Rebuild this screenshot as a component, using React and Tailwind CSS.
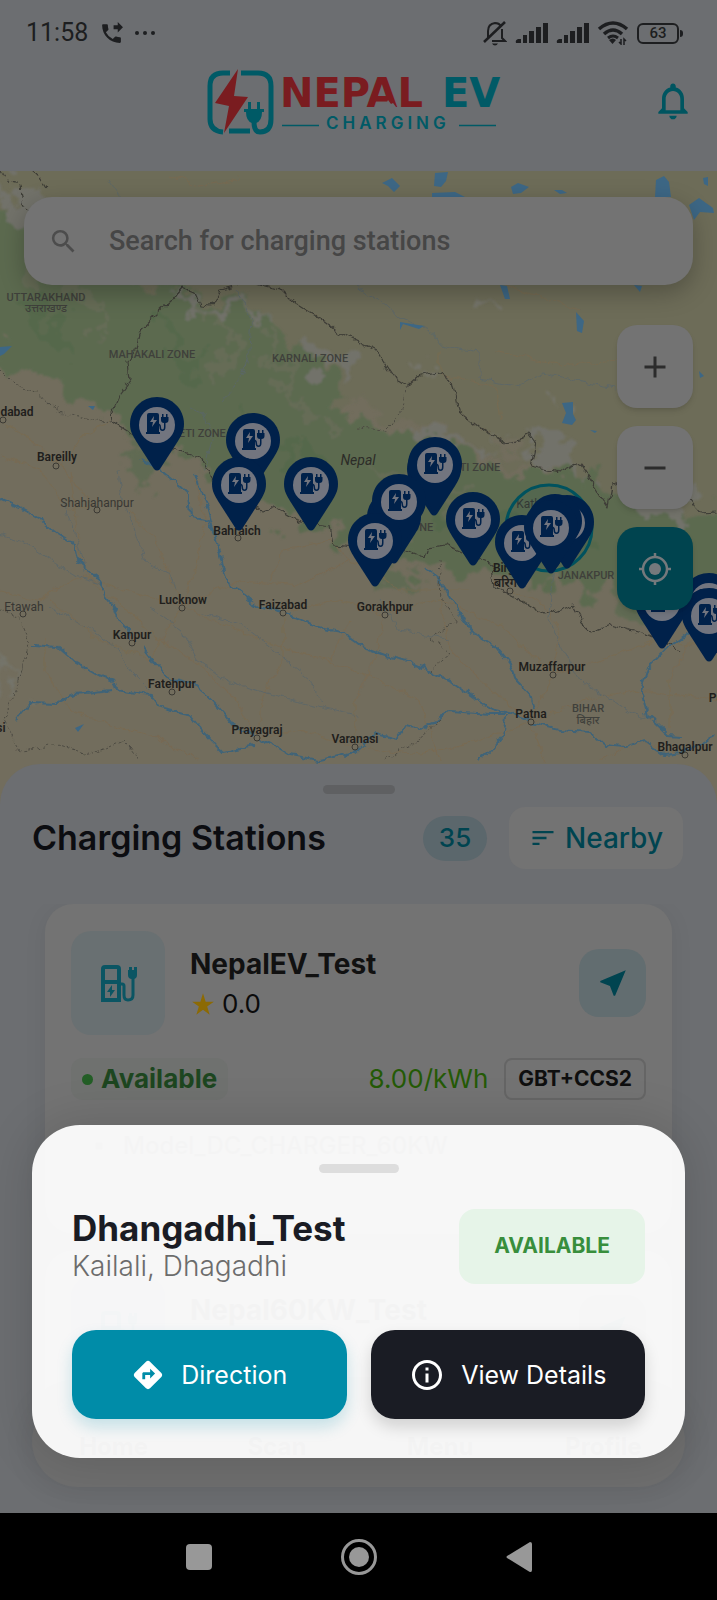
import {
  MdAdd,
  MdDirections,
  MdInfoOutline,
  MdNearMe,
  MdNotificationsNone,
  MdPhoneForwarded,
  MdRemove,
  MdSearch,
  MdSort,
  MdStarRate,
} from 'react-icons/md'

// x = tip of the pin, y = top of its head, painted back to front
const pins = [
  [157, 397], [253, 413], [239, 457], [311, 457],
  [434, 442], [435, 437], [394, 490], [399, 474], [375, 513],
  [473, 492], [522, 515], [567, 495], [555, 494], [551, 500],
  [662, 575], [709, 573], [709, 588],
]

const cities = [
  { name: 'dabad', x: 17, y: 416, dot: [3, 420] },
  { name: 'Bareilly', x: 57, y: 461, dot: [56, 466] },
  { name: 'Shahjahanpur', x: 97, y: 507, dot: [97, 510], light: true },
  { name: 'Bahraich', x: 237, y: 535, dot: [238, 538] },
  { name: 'Lucknow', x: 183, y: 604, dot: [182, 608] },
  { name: 'Faizabad', x: 283, y: 609, dot: [283, 613] },
  { name: 'Etawah', x: 24, y: 611, dot: [23, 614], light: true },
  { name: 'Kanpur', x: 132, y: 639, dot: [132, 643] },
  { name: 'Fatehpur', x: 172, y: 688, dot: [172, 692] },
  { name: 'Prayagraj', x: 257, y: 734, dot: [257, 738] },
  { name: 'Varanasi', x: 355, y: 743, dot: [355, 747] },
  { name: 'Gorakhpur', x: 385, y: 611, dot: [385, 615] },
  { name: 'Muzaffarpur', x: 552, y: 671, dot: [553, 675] },
  { name: 'Patna', x: 531, y: 718, dot: [531, 722] },
  { name: 'Bhagalpur', x: 685, y: 751, dot: [685, 755] },
  { name: 'Birgunj', x: 512, y: 572, dot: [510, 591] },
  { name: 'बरिगंज', x: 510, y: 587 },
  { name: 'Kathmandu', x: 547, y: 508, light: true },
  { name: 'Pu', x: 716, y: 702 },
  { name: 'si', x: 1, y: 732 },
]

const zones = [
  ['UTTARAKHAND', 46, 301],
  ['उत्तराखण्ड', 46, 312],
  ['MAHAKALI ZONE', 152, 358],
  ['KARNALI ZONE', 310, 362],
  ['SETI ZONE', 199, 437],
  ['BAGMATI ZONE', 461, 471],
  ['LUMBINI ZONE', 396, 531],
  ['JANAKPUR', 586, 579],
  ['BIHAR', 588, 712],
  ['बिहार', 588, 724],
]

const rivers = [
  'M0 499 L20 508 L42 520 L60 535 L74 544 L77 560 L88 570 L101 580 L106 597 L116 610 L120 622 L128 630 L129 638',
  'M144 648 L155 663 L168 678 L196 686 L210 698 L222 710 L234 725 L258 738',
  'M140 458 L160 470 L175 482 L188 494 L190 516 L208 520 L216 540 L224 570 L230 586 L245 596 L258 606 L283 612 L300 619 L320 628 L345 633 L361 646 L385 655 L410 661 L430 671 L455 684 L478 700 L495 710 L512 714 L531 722 L560 730 L590 732 L605 745 L625 747 L645 740 L665 755 L690 752 L717 734',
  'M195 473 L200 490 L208 510 L215 535',
  'M33 645 L58 647 L75 662 L96 674 L113 680 L116 690 L150 695 L160 708 L190 715 L204 733 L222 752 L255 745',
  'M113 690 L75 694 L55 704 L30 703 L14 722',
  'M258 738 L275 746 L290 755 L320 760 L355 752 L376 733 L397 738 L405 725 L422 728 L440 720 L450 711 L490 714 L512 714',
  'M424 567 L440 580 L450 596 L462 618 L474 633 L495 646 L510 664 L516 680 L530 695 L534 708',
  'M506 716 L503 735 L490 752 L477 762',
  'M690 632 L665 650 L648 668 L641 690 L647 715 L668 735 L680 736',
]

const streams = [
  'M0 534 L25 543 L50 560 L75 575 L104 583',
  'M118 470 L122 500 L135 530 L145 562 L172 575 L176 590',
  'M62 500 L74 530 L82 556 L84 572',
  'M150 608 L182 630 L198 660 L225 680 L262 692 L310 704 L358 715',
  'M200 613 L240 625 L268 645 L310 680 L322 702',
  'M50 608 L95 632 L118 650 L130 670 L150 690',
  'M357 288 L380 300 L400 318 L430 330 L440 345 L480 353 L480 378 L520 386 L545 373 L580 382 L617 388',
  'M222 402 L240 380 L250 350 L252 320 L236 290',
  'M560 500 L556 560 L548 620 L580 680 L630 712 L655 720',
  'M190 408 L205 415 L212 440 L204 470',
  'M110 180 L130 210 M380 600 L400 630 L450 640',
]

const roads = [
  'M70 470 L75 510 L80 560 L100 590 L130 612 L160 640 L200 665 L235 700 L257 738',
  'M0 590 L40 602 L60 585 L85 576 L120 590 L182 605 L220 625 L290 650 L360 672 L420 700 L440 760',
  'M0 456 L40 470 L70 510 L120 500 L155 540 L182 605',
  'M182 605 L195 570 L205 520 L195 480',
  'M182 605 L240 580 L300 585 L350 560 L400 590 L470 590',
  'M270 580 L285 550 L330 540 L350 560',
  'M182 605 L150 660 L100 640 L50 600',
  'M283 612 L283 660 L260 700 L257 738',
  'M283 612 L340 600 L385 615 L440 600 L500 625 L553 675 L600 660 L660 640 L717 650',
  'M385 615 L375 660 L355 700 L355 747',
  'M257 738 L300 730 L355 747 L420 755 L480 740 L531 722 L585 700 L640 690 L717 700',
  'M45 640 L45 670 L70 710 L110 725 L150 735 L200 760',
  'M553 675 L540 700 L531 722 L545 764',
  'M553 675 L560 630 L540 600 L510 591',
  'M440 600 L450 650 L480 680 L531 722',
  'M600 760 L640 740 L685 755',
  'M350 620 L330 660 L290 650',
  'M60 466 L80 440 L110 420 M0 420 L30 440 L60 466 L97 510',
  'M440 350 L440 375 L495 385 L500 420 M495 350 L560 365 L617 360',
  'M170 175 L200 185 L240 178 M480 270 L520 290 L580 310',
  'M690 640 L670 680 L670 730',
]

const lakes = [
  '382,183 392,178 400,186 394,192 388,186',
  '435,173 448,172 446,181 441,187 434,186',
  '432,193 455,192 465,197 432,197',
  '511,187 518,183 529,187 521,193 513,194',
  '554,190 562,190 567,193 560,194',
  '655,197 656,180 664,176 669,182 671,197',
  '689,205 699,198 713,208 714,213 700,212 694,220',
  '703,178 708,177 708,186 704,184',
  '500,285 507,286 510,299 505,299',
  '576,312 584,321 582,333 577,331',
  '634,285 642,286 640,292',
  '400,322 424,326 419,329 403,324 400,330',
  '562,403 573,402 573,414 576,420 572,425 562,423 566,413',
  '590,430 597,431 595,433',
  '699,371 704,376 700,378',
  '75,728 84,724 78,732',
  '88,406 95,406 93,410',
  '0,347 12,346 4,354 0,356',
]

function ChargerGlyph() {
  return (
    <g>
      <path
        fillRule="evenodd"
        d="M-10 -9 q0 -2 2 -2 h8 q2 0 2 2 v17 h1 v2 h-14 v-2 h1z M-3 -8 l-4 6 h3 l-1 5 5 -7 h-3.500z"
      />
      <path d="M5 -7 v-3 h1.500 v3 h2.500 v-3 h1.500 v3 h1 v3 q0 3 -3 3 v4 q0 4 -3 4 q-3 0 -3 -4 q0 -2 -1.500 -2 v-1.500 q3 0 3 3.500 q0 2.500 1.500 2.500 q1.500 0 1.500 -2.500 v-4 q-3 0 -3 -3 v-3z" />
    </g>
  )
}

function StationMap() {
  return (
    <svg
      viewBox="0 171 717 640"
      preserveAspectRatio="xMidYMin slice"
      className="absolute inset-0 h-full w-full"
      role="img"
      aria-label="Map of charging stations"
    >
      <defs>
        <filter id="terrain" x="-10%" y="-10%" width="120%" height="120%">
          <feTurbulence type="fractalNoise" baseFrequency="0.04" numOctaves="5" seed="7" />
          <feDisplacementMap in="SourceGraphic" scale="70" xChannelSelector="R" yChannelSelector="G" />
          <feGaussianBlur stdDeviation="1" />
        </filter>
        <filter id="wiggle" x="-10%" y="-10%" width="120%" height="120%">
          <feTurbulence type="fractalNoise" baseFrequency="0.09" numOctaves="3" seed="3" />
          <feDisplacementMap in="SourceGraphic" scale="9" xChannelSelector="R" yChannelSelector="G" />
        </filter>
      </defs>

      <rect y="170" width="717" height="642" fill="#726d5d" />
      <path d="M-20 130 H740 V560 L560 470 L340 400 L200 300 L-20 240z" fill="#6d6c59" filter="url(#terrain)" />
      <g filter="url(#terrain)">
        <path
          d="M-40 195 L70 235 L150 282 L240 300 L300 345 L345 395 L350 425 L420 440 L520 470 L600 480 L760 515 V600 L620 596 L540 580 L430 565 L370 550 L330 532 L290 520 L230 488 L180 450 L125 430 L70 398 L30 370 L-40 350z"
          fill="#5c6a50"
        />
        <path d="M0 185 L40 190 L50 225 L10 230z M170 292 L240 305 L270 320 L200 312z M300 345 L345 350 L350 380 L310 370z M520 440 L560 445 L590 480 L545 470z M410 430 L500 445 L440 455z M640 480 L700 500 L690 520 L640 505z" fill="#72726a" />
        <path d="M130 440 L160 455 L150 490 L135 470z M380 570 L420 570 L390 590z M590 590 L700 600 L640 615z" fill="#606b52" />
        <path d="M200 300 L230 340 L215 390 M270 330 L290 400 L330 420 M60 260 L110 330 M20 250 L50 330 M370 460 L460 500" stroke="#666c57" strokeWidth="8" fill="none" />
        <path d="M470 305 L490 320 M555 385 L560 400 M420 365 L425 375 M0 660 L10 700" stroke="#75746b" strokeWidth="6" fill="none" />
        <path d="M160 330 L200 370 M30 290 L70 360 M240 420 L330 480 M440 520 L600 545" stroke="#55674b" strokeWidth="14" fill="none" />
      </g>

      <g fill="none" filter="url(#wiggle)" strokeLinejoin="round">
        <g stroke="#7a6a50" strokeWidth="1.200" opacity=".7">
          {roads.map((d) => <path key={d} d={d} />)}
        </g>
        <g stroke="#5a666a" strokeWidth="1" opacity=".8">
          {streams.map((d) => <path key={d} d={d} />)}
        </g>
        <g stroke="#3f6478" strokeWidth="2">
          {rivers.map((d) => <path key={d} d={d} />)}
        </g>
        <g stroke="#3d3c36" strokeWidth="1.200">
          <path d="M182 288 L170 302 L155 316 L140 330 L136 348 L128 362 L130 380 L118 396 L111 412 L112 422 L128 432 L150 440 L175 450 L200 458 L212 478 L235 495 L263 512 L275 507 L300 522 L330 526 L333 545 L355 547 L405 549 L425 558 L428 548 L445 545 L470 556 L492 565 L494 586 L520 600 L545 615 L573 605 L582 622 L592 631 L610 624 L650 636 L680 650" />
          <path d="M182 288 L195 293 L200 305 L212 306 L220 290 L250 282 L280 290 L290 300 L320 318 L340 333 L360 343 L378 352 L395 378 L408 387 L420 376 L438 373 L452 380 L458 410 L480 428 L505 443 L520 440 L530 434 L536 442 L531 466 L560 472 L580 463 L600 495 L608 507 L612 485 L640 478 L690 500 L700 513 L717 512" />
          <path d="M2 172 L8 182 L20 185 L24 207 L36 215 M35 170 L47 190" strokeDasharray="5 3" />
        </g>
        <g stroke="#4e4c43" strokeWidth="1" strokeDasharray="3 2">
          <path d="M0 370 L15 385 L35 392 L60 412 L95 420 L112 422" />
          <path d="M0 610 L20 620 L30 645 L15 690 L4 720 L20 750 L60 745 L90 755 L125 740 L140 762" />
          <path d="M440 558 L442 600 L458 622 L430 638 L450 655 L430 672 M440 720 L410 745 L385 760" />
          <path d="M408 387 L400 415 L385 430 L358 428" />
        </g>
      </g>
      <g fill="#3d6785">
        {lakes.map((p) => <polygon key={p} points={p} />)}
      </g>

      <g fontFamily="Roboto, 'Noto Sans', sans-serif" textAnchor="middle">
        <g fontSize="11" fontWeight="500" fill="#3f403b">
          {zones.map(([name, x, y]) => <text key={name} x={x} y={y}>{name}</text>)}
        </g>
        {cities.map((c) => (
          <g key={c.name}>
            {c.dot && <circle cx={c.dot[0]} cy={c.dot[1]} r="3" fill="#726d5d" stroke="#3b3933" />}
            <text x={c.x} y={c.y} fontSize="12" fontWeight={c.light ? 400 : 600} fill={c.light ? '#383733' : '#1f1e1c'}>
              {c.name}
            </text>
          </g>
        ))}
        <text x="358" y="465" fontSize="14" fontStyle="italic" fill="#2c2c28">Nepal</text>
      </g>

      <circle cx="549" cy="528" r="43" fill="#00525e" fillOpacity=".08" stroke="#00525e" strokeWidth="3" />
      {pins.map(([x, y]) => (
        <g key={`${x}-${y}`} transform={`translate(${x} ${y + 27})`} fill="#00214a">
          <path d="M0 -27 C15 -27 27 -15 27 0 C27 7 24 12 21 17 L3 45 Q0 48 -3 45 L-21 17 C-24 12 -27 7 -27 0 C-27 -15 -15 -27 0 -27z" />
          <circle cy="1" r="18" fill="#72757f" />
          <ChargerGlyph />
        </g>
      ))}
    </svg>
  )
}

function Signal() {
  return (
    <svg width="33" height="22" viewBox="0 0 33 22" fill="#1d1e20" aria-hidden="true">
      <path d="M1 21 q-1 -3 2 -4 h3 v4z" />
      <rect x="8" y="13" width="4" height="8" />
      <rect x="14" y="9" width="5" height="12" />
      <rect x="21" y="5" width="5" height="16" />
      <rect x="28" y="1" width="5" height="20" />
    </svg>
  )
}

function BellOff() {
  return (
    <svg width="24" height="26" viewBox="0 0 24 26" fill="none" stroke="#1d1e20" strokeWidth="2" aria-hidden="true">
      <path d="M5 18 V11 q0 -7 7 -8 q4 0 6 3 M19 9 v9 l3 3 H9" />
      <path d="M1 22 L22 2" strokeWidth="2.500" />
      <path d="M9 23.500 h6 q-1 2 -3 2 t-3 -2z" fill="#1d1e20" stroke="none" />
    </svg>
  )
}

function Wifi() {
  return (
    <svg width="32" height="24" viewBox="0 0 32 24" fill="none" stroke="#1d1e20" strokeWidth="3.500" aria-hidden="true">
      <path d="M2 8 Q16 -4 30 8" />
      <path d="M7 13 Q16 5 25 13" />
      <path d="M11 17 Q16 13 21 17" strokeWidth="3" />
      <path d="M12 19 q4 -3 7 0 l-3.500 4z" fill="#1d1e20" stroke="none" />
      <path d="M24 18 v5 l-2 -2 M27 24 v-6 l2 2" strokeWidth="1.500" />
    </svg>
  )
}

function StatusBar() {
  return (
    <div className="flex h-[66px] items-center justify-between pr-[34px] pl-[26px] text-[#1d1e20]">
      <div className="flex items-center gap-[11px]">
        <span className="font-[Roboto] text-[25px] leading-8">11:58</span>
        <MdPhoneForwarded size={25} />
        <svg width="22" height="6" viewBox="0 0 22 6" fill="currentColor" aria-hidden="true">
          <circle cx="2" cy="3" r="2" />
          <circle cx="10" cy="3" r="2" />
          <circle cx="18" cy="3" r="2" />
        </svg>
      </div>
      <div className="flex items-center gap-2">
        <BellOff />
        <Signal />
        <Signal />
        <Wifi />
        <div className="flex items-center gap-px">
          <span className="flex h-[21px] w-[42px] items-center justify-center rounded-md border-2 border-[#1d1e20] font-[Roboto] text-[15px] leading-4 font-medium">
            63
          </span>
          <span className="h-[7px] w-[3px] rounded-r bg-[#1d1e20]" />
        </div>
      </div>
    </div>
  )
}

function Logo() {
  return (
    <svg width="304" height="70" viewBox="206 66 304 70" role="img" aria-label="Nepal EV Charging">
      <g fill="none" stroke="#005a66" strokeWidth="5">
        <path d="M229 73 h-7 q-13 0 -13 13 v33 q0 12 13 13" />
        <path d="M240 73 h17 q13 0 13 13 v33 q0 13 -11 13 q-6 0 -6 -10" />
        <path d="M228 131 h21" />
      </g>
      <path d="M237 69 L214 103 L228 106 L223 133 L247 97 L233 96z" fill="#7a1c20" />
      <path d="M247 102 h3 v7 h6 v-7 h3 v7 h4 v3 h-2 q0 9 -6 11 h-4 q-6 -2 -6 -11 h-2 v-3 h4z" fill="#005a66" />
      <g fontFamily="'DejaVu Sans', sans-serif" fontWeight="700" fontSize="40">
        <text x="279" y="107" fill="#7a1c20">NEPAL</text>
        <text x="441" y="107" fill="#005a66">EV</text>
      </g>
      <path d="M379 107 l4 -4 2 1 2 -4 3 4 2 -1 3 4z" fill="#6c6e71" />
      <path d="M281 125.500 h37 M458 125.500 h37" stroke="#005a66" strokeWidth="1.500" />
      <text x="325" y="129" fill="#005a66" fontFamily="Inter, sans-serif" fontWeight="600" fontSize="17" letterSpacing="4">
        CHARGING
      </text>
    </svg>
  )
}

function LocateIcon() {
  return (
    <svg width="34" height="34" viewBox="0 0 34 34" fill="none" stroke="currentColor" strokeWidth="2.500" aria-hidden="true">
      <circle cx="17" cy="17" r="12" />
      <circle cx="17" cy="17" r="6" fill="currentColor" stroke="none" />
      <path d="M17 1 v4 M17 29 v4 M1 17 h4 M29 17 h4" />
    </svg>
  )
}

function MapButton({ label, teal, children }) {
  return (
    <button
      aria-label={label}
      className={`flex h-[83px] w-19 items-center justify-center rounded-[20px] shadow-md ${
        teal ? 'bg-[#00444f] text-[#75797c]' : 'bg-[#737373] text-[#2c2c2c]'
      }`}
    >
      {children}
    </button>
  )
}

function PumpIcon() {
  return (
    <svg width="38" height="38" viewBox="0 0 38 38" fill="none" stroke="#0b5563" strokeWidth="4" aria-hidden="true">
      <path d="M4 36 V5 q0 -2 2 -2 h12 q2 0 2 2 V36z M4 18 h16" />
      <path d="M20 20 h3 q2 0 2 2 v9 q0 5 4 5 q5 0 5 -5 V14" strokeWidth="3" />
      <path d="M29 6 h9 v5 q0 4 -4 4 h-1 q-4 0 -4 -4z M30 7 v-4 h3 v4z M35 7 v-4 h3 v4z" fill="#0b5563" stroke="none" />
      <path d="M13 21 l-5 7 h3 v5 l5 -7 h-3z" fill="#0b5563" stroke="none" />
    </svg>
  )
}

function StationCard({ name, rating, model }) {
  return (
    <article className="h-[330px] shrink-0 rounded-[28px] bg-[#737373] px-[26px] py-[27px] shadow-[0_4px_24px_rgba(0,0,0,0.06)]">
      <div className="flex items-start">
        <div className="flex h-[104px] w-[94px] items-center justify-center rounded-[20px] bg-[#697072]">
          <PumpIcon />
        </div>
        <div className="ml-[25px] flex-1 pt-[13px]">
          <h3 className="text-[28px] leading-10 font-bold text-[#111111]">{name}</h3>
          {rating && (
            <p className="flex items-center gap-[6px] text-[26px] leading-10 text-[#0b0b0b]">
              <MdStarRate size={26} className="text-[#8c6a04]" />
              {rating}
            </p>
          )}
        </div>
        <button aria-label="Navigate" className="flex h-[68px] w-[67px] items-center justify-center self-center rounded-[20px] bg-[#626d70] text-[#004450]">
          <MdNearMe size={34} />
        </button>
      </div>
      {model && (
        <>
          <div className="mt-[23px] flex items-center">
            <span className="flex h-[42px] items-center gap-2 rounded-xl bg-[#6f716f] px-[11px] text-[26px] leading-8 font-bold text-[#1d4620]">
              <span className="size-[11px] rounded-full bg-[#235e26]" />
              Available
            </span>
            <span className="ml-auto text-[26px] leading-8 text-[#245a06]">8.00/kWh</span>
            <span className="ml-4 flex h-[42px] items-center rounded-lg border-2 border-[#656565] px-[12px] text-[21px] leading-6 font-bold text-[#0f0f0f]">
              GBT+CCS2
            </span>
          </div>
          <div className="mt-[28px] flex items-center gap-5 pl-[24px] text-[24px] leading-9 font-medium text-[#333333]">
            <span className="size-2 rounded-full bg-[#555555]" />
            {model}
          </div>
        </>
      )}
    </article>
  )
}

function SelectedStation() {
  return (
    <section className="absolute inset-x-8 bottom-[55px] rounded-[48px] bg-[#fbfbfb]/97 px-10 py-[39px] shadow-[0_0_50px_rgba(0,0,0,0.15)]">
      <div className="mx-auto h-[9px] w-20 rounded-full bg-[#dddddd]" />
      <div className="mt-[35px] flex items-center justify-between">
        <div>
          <h2 className="text-[35px] leading-10 font-bold text-[#1a1c24]">Dhangadhi_Test</h2>
          <p className="text-[28px] leading-9 font-light text-[#6c6c6c]">Kailali, Dhagadhi</p>
        </div>
        <span className="flex h-[75px] items-center rounded-2xl bg-[#e6f4e8] px-[35px] text-[21px] leading-6 font-bold text-[#388e3c]">
          AVAILABLE
        </span>
      </div>
      <div className="mt-[46px] grid grid-cols-2 gap-6">
        <button className="flex h-[89px] items-center justify-center gap-4 rounded-3xl bg-[#008ca8] text-[25px] leading-8 text-white shadow-[0_8px_16px_rgba(0,140,168,0.2)]">
          <MdDirections size={34} />
          Direction
        </button>
        <button className="flex h-[89px] items-center justify-center gap-4 rounded-3xl bg-[#1a1c24] text-[25px] leading-8 text-white shadow-[0_8px_16px_rgba(0,0,0,0.15)]">
          <MdInfoOutline size={36} />
          View Details
        </button>
      </div>
    </section>
  )
}

function SystemNav() {
  return (
    <div className="flex h-[87px] shrink-0 items-center justify-center gap-[129px] bg-black text-[#989898]">
      <button aria-label="Recent apps" className="size-[26px] rounded bg-[#989898]" />
      <button aria-label="Home screen" className="flex size-9 items-center justify-center rounded-full border-3 border-[#989898]">
        <span className="size-5 rounded-full bg-[#989898]" />
      </button>
      <button aria-label="Back">
        <svg width="26" height="30" viewBox="0 0 26 30" fill="currentColor">
          <path d="M24 0 q2 0 2 2 v26 q0 3 -3 1.500 L1 16 q-1 -1 0 -2z" />
        </svg>
      </button>
    </div>
  )
}

export default function App() {
  return (
    <div className="flex h-screen flex-col overflow-hidden bg-[#6c6e71] font-[Inter,sans-serif]">
      <header className="h-[171px] shrink-0">
        <StatusBar />
        <div className="grid grid-cols-[1fr_auto_1fr] items-center px-[22px]">
          <span />
          <Logo />
          <button aria-label="Notifications" className="justify-self-end text-[#005560]">
            <MdNotificationsNone size={44} />
          </button>
        </div>
      </header>

      <section className="relative h-[640px] shrink-0 overflow-hidden px-6 pt-[26px]">
        <StationMap />
        <label className="relative flex h-[88px] items-center gap-[30px] rounded-[28px] bg-[#737373] px-6 text-[#4c4c4c] shadow-[0_8px_24px_rgba(0,0,0,0.25)]">
          <MdSearch size={31} className="shrink-0" />
          <input
            type="search"
            aria-label="Search for charging stations"
            placeholder="Search for charging stations"
            className="w-full bg-transparent font-[Roboto] text-[27px] leading-8 font-medium outline-none placeholder:text-[#464646]"
          />
        </label>
        <div className="relative mt-10 flex flex-col items-end gap-[18px]">
          <MapButton label="Zoom in"><MdAdd size={36} /></MapButton>
          <MapButton label="Zoom out"><MdRemove size={36} /></MapButton>
          <MapButton label="My location" teal><LocateIcon /></MapButton>
        </div>
      </section>

      <main className="relative -mt-[47px] flex min-h-0 flex-1 flex-col overflow-hidden rounded-t-[40px] bg-[#6c6e71] pt-[21px]">
        <div className="mx-auto h-[9px] w-[72px] shrink-0 rounded-full bg-[#5f6062]" />
        <div className="mt-[13px] flex shrink-0 items-center pr-[34px] pl-8">
          <h1 className="flex-1 text-[34px] leading-10 font-semibold text-[#0c0d11]">Charging Stations</h1>
          <span className="flex h-[45px] w-16 items-center justify-center rounded-full bg-[#5b676c] text-[26px] leading-8 font-medium text-[#004450]">
            35
          </span>
          <button className="ml-[22px] flex h-[62px] items-center gap-2 rounded-2xl bg-[#737373] px-5 text-[28px] leading-8 font-medium text-[#004450]">
            <MdSort size={28} />
            Nearby
          </button>
        </div>
        <div className="mt-[35px] mb-[100px] flex min-h-0 flex-col gap-4 overflow-hidden px-[45px]">
          <StationCard name="NepalEV_Test" rating="0.0" model="Model_DC_CHARGER_60KW" />
          <StationCard name="Nepal60KW_Test" />
        </div>

        <nav className="absolute inset-x-8 bottom-[26px] flex h-[92px] items-start rounded-[46px] bg-[#6e6e6e] pt-[36px] text-center text-[24px] leading-8 font-bold text-black shadow-[0_0_30px_rgba(0,0,0,0.1)]">
          <a href="#home" className="flex-1">Home</a>
          <a href="#scan" className="flex-1">Scan</a>
          <a href="#menu" className="flex-1">Menu</a>
          <a href="#profile" className="flex-1">Profile</a>
        </nav>
        <SelectedStation />
      </main>

      <SystemNav />
    </div>
  )
}
